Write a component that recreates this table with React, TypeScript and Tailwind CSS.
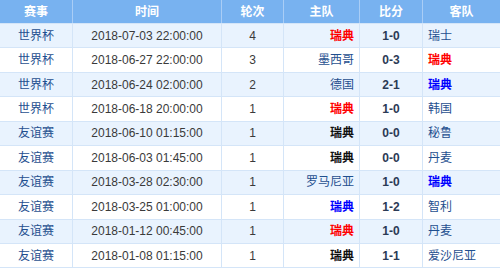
import React from 'react'

type Team = { name: string, tone?: 'red' | 'blue' | 'black' }

type Match = {
  cup: string,
  time: string,
  round: number,
  home: Team,
  score: string,
  away: Team
}

const matches: Match[] = [
  { cup: '世界杯', time: '2018-07-03 22:00:00', round: 4, home: { name: '瑞典', tone: 'red' }, score: '1-0', away: { name: '瑞士' } },
  { cup: '世界杯', time: '2018-06-27 22:00:00', round: 3, home: { name: '墨西哥' }, score: '0-3', away: { name: '瑞典', tone: 'red' } },
  { cup: '世界杯', time: '2018-06-24 02:00:00', round: 2, home: { name: '德国' }, score: '2-1', away: { name: '瑞典', tone: 'blue' } },
  { cup: '世界杯', time: '2018-06-18 20:00:00', round: 1, home: { name: '瑞典', tone: 'red' }, score: '1-0', away: { name: '韩国' } },
  { cup: '友谊赛', time: '2018-06-10 01:15:00', round: 1, home: { name: '瑞典', tone: 'black' }, score: '0-0', away: { name: '秘鲁' } },
  { cup: '友谊赛', time: '2018-06-03 01:45:00', round: 1, home: { name: '瑞典', tone: 'black' }, score: '0-0', away: { name: '丹麦' } },
  { cup: '友谊赛', time: '2018-03-28 02:30:00', round: 1, home: { name: '罗马尼亚' }, score: '1-0', away: { name: '瑞典', tone: 'blue' } },
  { cup: '友谊赛', time: '2018-03-25 01:00:00', round: 1, home: { name: '瑞典', tone: 'blue' }, score: '1-2', away: { name: '智利' } },
  { cup: '友谊赛', time: '2018-01-12 00:45:00', round: 1, home: { name: '瑞典', tone: 'red' }, score: '1-0', away: { name: '丹麦' } },
  { cup: '友谊赛', time: '2018-01-08 01:15:00', round: 1, home: { name: '瑞典', tone: 'black' }, score: '1-1', away: { name: '爱沙尼亚' } },
]

const toneClass = (t?: Team['tone']) => {
  if (t === 'red') return 'text-[#ff0000] font-bold'
  if (t === 'blue') return 'text-[#0000ff] font-bold'
  if (t === 'black') return 'text-[#111111] font-bold'
  return 'text-[#1f4f8f]'
}

const cols = 'grid grid-cols-[73px_149px_62px_76px_63px_77px]'
const cell = 'flex items-center border-r border-[#d4e5f8] last:border-r-0'

const App: React.FC = () => {
  return (
    <div className="w-[500px] h-[271px] overflow-hidden bg-white text-[12px] font-['Liberation_Sans','Noto_Sans_CJK_SC',sans-serif]">
      <div className={`${cols} h-[24px] bg-[#78b2f0] border-b border-[#d4e5f8] text-white font-bold`}>
        {['赛事', '时间', '轮次', '主队', '比分', '客队'].map((h) => (
          <div key={h} className="flex items-center justify-center border-r border-[#a9cdf6] last:border-r-0">
            {h}
          </div>
        ))}
      </div>
      {matches.map((m, i) => (
        <div
          key={i}
          className={`${cols} h-[24.45px] border-b border-[#d4e5f8] ${i % 2 === 0 ? 'bg-[#e9f3fe]' : 'bg-white'}`}
        >
          <div className={`${cell} justify-center text-[#1f4f8f]`}>{m.cup}</div>
          <div className={`${cell} justify-center text-[#3a3a3a]`}>{m.time}</div>
          <div className={`${cell} justify-center text-[#3a3a3a]`}>{m.round}</div>
          <div className={`${cell} justify-end pr-[5px] ${toneClass(m.home.tone)}`}>{m.home.name}</div>
          <div className={`${cell} justify-center font-bold text-[#2b3a55]`}>{m.score}</div>
          <div className={`${cell} justify-start pl-[5px] ${toneClass(m.away.tone)}`}>{m.away.name}</div>
        </div>
      ))}
    </div>
  )
}

export default App
